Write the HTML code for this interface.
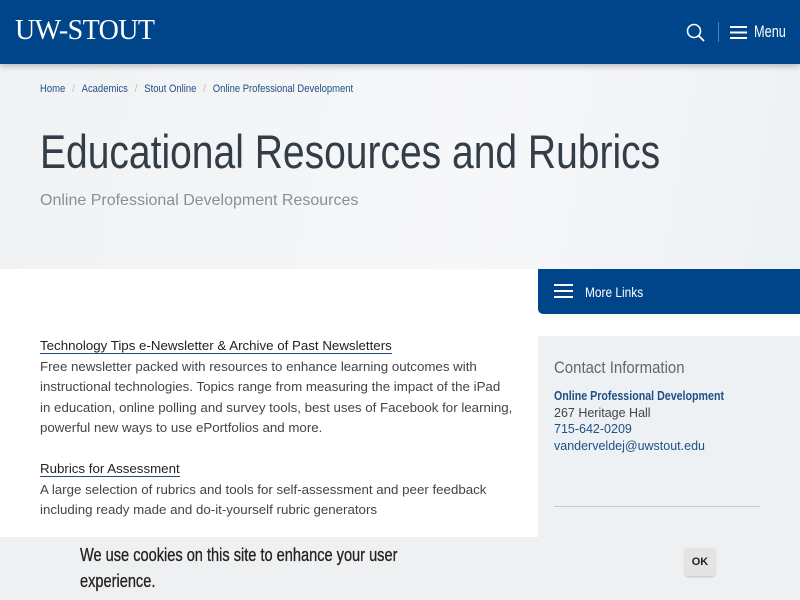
<!DOCTYPE html>
<html><head><style>
body{margin:0;width:800px;height:600px;overflow:hidden;font-family:"Liberation Sans",sans-serif;background:#fff;position:relative}
.n{display:inline-block;transform-origin:0 0;white-space:nowrap}
.hdr{position:absolute;top:0;left:0;width:800px;height:64px;background:#004589;box-shadow:0 2px 6px rgba(0,0,0,.25);z-index:2}
.logo{position:absolute;left:15px;top:15px;color:#fff;font-family:"Liberation Serif",serif;font-size:28px;letter-spacing:-0.6px}
.hero{position:absolute;top:64px;left:0;width:800px;height:205px;background:linear-gradient(100deg,#f0f2f4,#f6f7f9 60%,#eef1f4)}
.bc{position:absolute;left:40px;top:83px;font-size:11px;color:#1f4f85}
.bc span{color:#bbb;margin:0 8px}
h1{position:absolute;left:40px;top:124px;margin:0;font-weight:normal;font-size:47px;color:#333d47}
.sub{position:absolute;left:40px;top:192px;font-size:16px;color:#8a8f95}
.ml{position:absolute;left:538px;top:269px;width:262px;height:45px;background:#004589;border-radius:0 0 0 5px;color:#fff;font-size:14px}
.side{position:absolute;left:538px;top:336px;width:262px;height:201px;background:#eef1f4}
.main{position:absolute;left:40px;top:336px;width:480px;font-size:13.3px;line-height:20.5px;color:#444}
.main a{color:#222;text-decoration:none;border-bottom:1px solid #1f4f85}
.cookie{position:absolute;left:0;top:537px;width:800px;height:63px;background:#eef0f2}
</style></head><body>
<div class="hdr">
<div class="logo">UW-STOUT</div>
<svg style="position:absolute;left:686px;top:23px" width="20" height="20" viewBox="0 0 20 20"><circle cx="8" cy="8" r="6.5" fill="none" stroke="#fff" stroke-width="1.6"/><line x1="12.7" y1="12.7" x2="18" y2="18" stroke="#fff" stroke-width="1.8"/></svg>
<div style="position:absolute;left:718px;top:22px;width:1px;height:20px;background:#5a7fb0"></div>
<svg style="position:absolute;left:730px;top:26px" width="17" height="13"><rect y="0" width="17" height="2" fill="#fff"/><rect y="5.5" width="17" height="2" fill="#fff"/><rect y="11" width="17" height="2" fill="#fff"/></svg>
<div style="position:absolute;left:754px;top:22px;color:#fff;font-size:17px"><span class="n" style="transform:scaleX(.75)">Menu</span></div>
</div>
<div class="hero"></div>
<div class="bc"><span class="n" style="transform:scaleX(.86);margin:0;color:#1f4f85">Home<span>/</span>Academics<span>/</span>Stout Online<span>/</span>Online Professional Development</span></div>
<h1><span class="n" style="transform:scaleX(.83)">Educational Resources and Rubrics</span></h1>
<div class="sub">Online Professional Development Resources</div>
<div class="ml"><svg style="position:absolute;left:16px;top:15px" width="19" height="14"><rect y="0" width="19" height="2" fill="#fff"/><rect y="6" width="19" height="2" fill="#fff"/><rect y="12" width="19" height="2" fill="#fff"/></svg><div style="position:absolute;left:47px;top:15px"><span class="n" style="transform:scaleX(.85)">More Links</span></div></div>
<div class="side">
<div style="position:absolute;left:16px;top:22px;font-size:17px;color:#666"><span class="n" style="transform:scaleX(.88)">Contact Information</span></div>
<div style="position:absolute;left:16px;top:52px;font-size:12.5px;line-height:16.5px;color:#444"><b style="color:#1f4f85;font-size:13px" class="n"><span class="n" style="transform:scaleX(.82)">Online Professional Development</span></b><br>267 Heritage Hall<br><span style="color:#1f4f85">715-642-0209</span><br><span style="color:#1f4f85">vanderveldej@uwstout.edu</span></div>
<div style="position:absolute;left:16px;top:170px;width:206px;height:1px;background:#c5cad0"></div>
</div>
<div class="main">
<a>Technology Tips e-Newsletter &amp; Archive of Past Newsletters</a><br>Free newsletter packed with resources to enhance learning outcomes with instructional technologies. Topics range from measuring the impact of the iPad<br>in education, online polling and survey tools, best uses of Facebook for learning,<br>powerful new ways to use ePortfolios and more.<br><br>
<a>Rubrics for Assessment</a><br>A large selection of rubrics and tools for self-assessment and peer feedback including ready made and do-it-yourself rubric generators
</div>
<div class="cookie">
<div style="position:absolute;left:80px;top:5px;font-size:18px;line-height:26px;color:#222;-webkit-text-stroke:0.3px #222"><span class="n" style="transform:scaleX(.81)">We use cookies on this site to enhance your user</span><br><span class="n" style="transform:scaleX(.81)">experience.</span></div>
<div style="position:absolute;left:685px;top:11px;width:30px;height:28px;background:#e4e4e4;border-radius:3px;box-shadow:0 1px 2px rgba(0,0,0,.2);font-size:11px;font-weight:bold;text-align:center;line-height:28px;color:#222">OK</div>
</div>
</body></html>
